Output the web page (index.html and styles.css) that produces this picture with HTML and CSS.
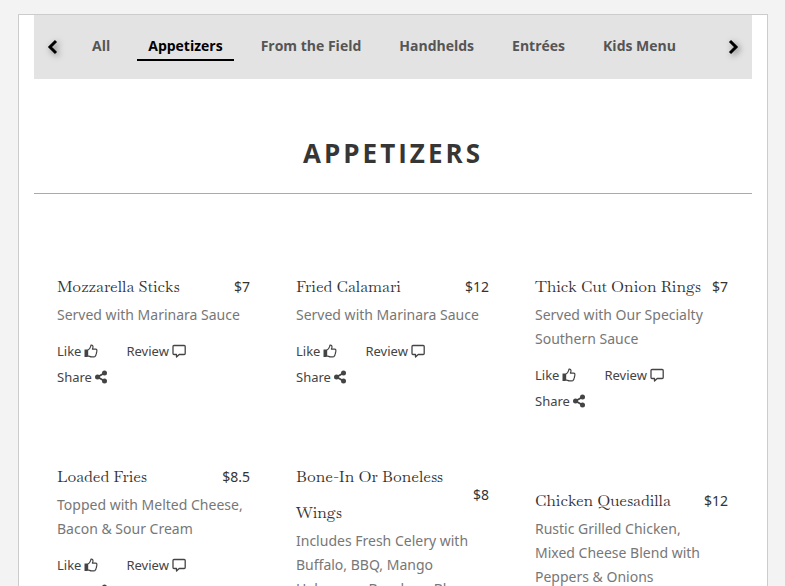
FILE: index.html
```html
<!DOCTYPE html>
<html lang="en">
<head>
<meta charset="utf-8">
<meta name="viewport" content="width=device-width, initial-scale=1">
<title>Menu - Appetizers</title>
<link rel="stylesheet" href="styles.css">
</head>
<body>
<svg class="sprite" aria-hidden="true">
  <symbol id="thumb" viewBox="0 0 14 14">
    <path fill="currentColor" d="M0.5 5.500h3.200v7.500H0.500z"/>
    <path fill="none" stroke="currentColor" stroke-width="1.200" stroke-linejoin="round" d="M3.600 6.200C5 5.500 6.200 4 6.600 2.600L7 1.200c1.500-.3 2.200.9 1.900 2.300L8.400 5.200h3.300c1.100 0 1.500 1 1 1.800.3.600.2 1.300-.3 1.700.2.600 0 1.200-.4 1.600.1.600-.2 1.200-.6 1.500 0 .8-.6 1.100-1.300 1.100H7.500c-1.400 0-2.300-.9-3.900-1z"/>
  </symbol>
  <symbol id="comment" viewBox="0 0 14 14">
    <path fill="none" stroke="currentColor" stroke-width="1.300" stroke-linejoin="round" d="M2 1.500h10.200q1 0 1 1v7q0 1-1 1H7.200L4.500 13v-2.500H2q-1 0-1-1v-7q0-1 1-1z"/>
  </symbol>
  <symbol id="share" viewBox="0 0 14 14">
    <path fill="none" stroke="currentColor" stroke-width="1.800" d="M9.500 3L2.600 7l6.900 4"/>
    <g fill="currentColor"><circle cx="9.500" cy="3" r="2.500"/><circle cx="2.500" cy="7" r="2.500"/><circle cx="9.500" cy="11" r="2.500"/></g>
  </symbol>
</svg>
<main class="page">
  <nav class="tabs" aria-label="Menu sections">
    <button class="arrow" type="button" aria-label="Previous sections"><svg viewBox="0 0 10 16"><path d="M8 2L2 8l6 6"/></svg></button>
    <div class="tab-list">
      <a class="tab" href="#all">All</a>
      <a class="tab active" href="#appetizers" aria-current="true">Appetizers</a>
      <a class="tab" href="#field">From the Field</a>
      <a class="tab" href="#handhelds">Handhelds</a>
      <a class="tab" href="#entrees">Entrées</a>
      <a class="tab" href="#kids">Kids Menu</a>
    </div>
    <button class="arrow" type="button" aria-label="Next sections"><svg viewBox="0 0 10 16"><path d="M2 2l6 6-6 6"/></svg></button>
  </nav>
  <h1 class="heading" id="appetizers">Appetizers</h1>
  <div class="columns">
    <div class="column">
      <article class="item">
        <header class="item-head"><h2 class="name">Mozzarella Sticks</h2><span class="price">$7</span></header>
        <p class="desc">Served with Marinara Sauce</p>
        <div class="actions">
          <button class="action" type="button">Like <svg class="icon"><use href="#thumb"/></svg></button>
          <button class="action" type="button">Review <svg class="icon"><use href="#comment"/></svg></button>
          <button class="action" type="button">Share <svg class="icon"><use href="#share"/></svg></button>
        </div>
      </article>
      <article class="item">
        <header class="item-head"><h2 class="name">Loaded Fries</h2><span class="price">$8.5</span></header>
        <p class="desc">Topped with Melted Cheese, Bacon &amp; Sour Cream</p>
        <div class="actions">
          <button class="action" type="button">Like <svg class="icon"><use href="#thumb"/></svg></button>
          <button class="action" type="button">Review <svg class="icon"><use href="#comment"/></svg></button>
          <button class="action" type="button">Share <svg class="icon"><use href="#share"/></svg></button>
        </div>
      </article>
    </div>
    <div class="column">
      <article class="item">
        <header class="item-head"><h2 class="name">Fried Calamari</h2><span class="price">$12</span></header>
        <p class="desc">Served with Marinara Sauce</p>
        <div class="actions">
          <button class="action" type="button">Like <svg class="icon"><use href="#thumb"/></svg></button>
          <button class="action" type="button">Review <svg class="icon"><use href="#comment"/></svg></button>
          <button class="action" type="button">Share <svg class="icon"><use href="#share"/></svg></button>
        </div>
      </article>
      <article class="item">
        <header class="item-head"><h2 class="name">Bone-In Or Boneless Wings</h2><span class="price">$8</span></header>
        <p class="desc">Includes Fresh Celery with Buffalo, BBQ, Mango Habanero, Bourbon, Bleu Cheese</p>
      </article>
    </div>
    <div class="column">
      <article class="item">
        <header class="item-head"><h2 class="name">Thick Cut Onion Rings</h2><span class="price">$7</span></header>
        <p class="desc">Served with Our Specialty Southern Sauce</p>
        <div class="actions">
          <button class="action" type="button">Like <svg class="icon"><use href="#thumb"/></svg></button>
          <button class="action" type="button">Review <svg class="icon"><use href="#comment"/></svg></button>
          <button class="action" type="button">Share <svg class="icon"><use href="#share"/></svg></button>
        </div>
      </article>
      <article class="item">
        <header class="item-head"><h2 class="name">Chicken Quesadilla</h2><span class="price">$12</span></header>
        <p class="desc">Rustic Grilled Chicken, Mixed Cheese Blend with Peppers &amp; Onions</p>
      </article>
    </div>
  </div>
</main>
</body>
</html>
```
FILE: styles.css
```css
* { box-sizing: border-box; }
html { overflow: hidden; }
body {
  margin: 0;
  padding: 14px 17px 0 18px;
  height: 100vh;
  overflow: hidden;
  background: #f3f3f3;
  color: #444;
  font-family: "Noto Sans", sans-serif;
  font-size: 14px;
}
.sprite { display: none; }
.page {
  min-height: 100vh;
  padding: 0 15px;
  background: #fff;
  border: 1px solid #ccc;
}
.tabs {
  display: flex;
  align-items: center;
  height: 64px;
  background: #e3e3e3;
}
.tab-list { display: flex; flex: 1; gap: 16px; padding-left: 9px; }
.tab {
  padding: 0 11px;
  line-height: 26px;
  border-bottom: 2px solid transparent;
  color: #555;
  font-family: "Open Sans", sans-serif;
  font-weight: 700;
  text-decoration: none;
  white-space: nowrap;
}
.tab.active { color: #000; border-color: #000; }
.arrow {
  width: 38px;
  padding: 0;
  border: 0;
  background: none;
  line-height: 0;
}
.arrow svg {
  width: 10px;
  height: 16px;
  overflow: visible;
  fill: none;
  stroke: #000;
  stroke-width: 3;
  filter: drop-shadow(2px 2px 3px rgba(0, 0, 0, 0.5));
}
.heading {
  margin: 0 0 75px;
  padding: 56px 0 22px;
  border-bottom: 1px solid #aaa;
  color: #363636;
  font-family: "Open Sans", sans-serif;
  font-size: 26px;
  line-height: 36px;
  letter-spacing: 3px;
  text-align: center;
  text-transform: uppercase;
}
.columns { display: grid; grid-template-columns: repeat(3, 1fr); padding-right: 1px; }
.column { padding: 0 23px; min-width: 0; }
.item { margin-bottom: 69px; }
.item-head {
  display: flex;
  align-items: center;
  justify-content: space-between;
  gap: 8px;
  margin-bottom: -2px;
}
.name {
  margin: 0;
  color: #333;
  font-family: "Baskervville", "Libre Baskerville", "Liberation Serif", serif;
  font-size: 16px;
  font-weight: 400;
  line-height: 36px;
}
.price { color: #333; line-height: 36px; }
.desc { margin: 0; padding-right: 6px; color: #777; line-height: 24px; }
.actions { display: flex; flex-wrap: wrap; padding-top: 11px; column-gap: 28px; }
.action {
  display: flex;
  align-items: center;
  gap: 3px;
  height: 26px;
  padding: 0;
  border: 0;
  background: none;
  color: #444;
  font-family: inherit;
  font-size: 13px;
}
.icon { width: 14px; height: 14px; }
```
